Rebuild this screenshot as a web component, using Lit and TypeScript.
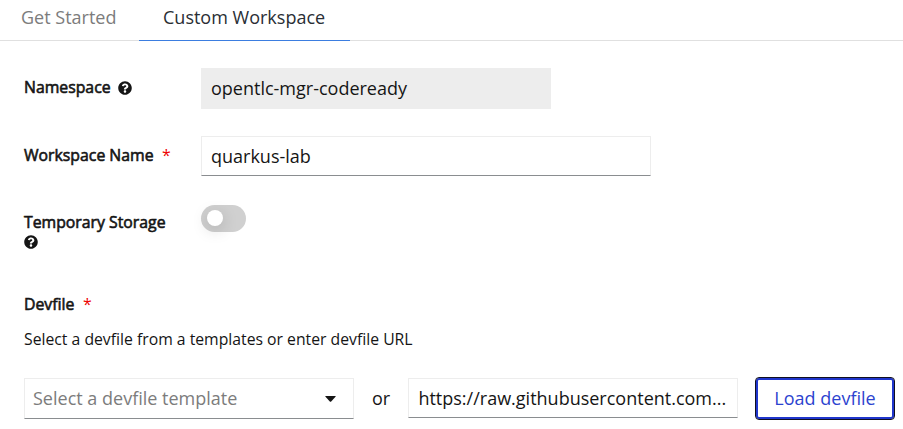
import { LitElement, html, css } from "lit";
import { customElement } from "lit/decorators.js";

const help = html`<svg class="help" viewBox="0 0 512 512" aria-label="Help">
  <path fill="currentColor" d="M504 256c0 136.997-111.043 248-248 248S8 392.997 8 256C8 119.083 119.043 8 256 8s248 111.083 248 248zM262.655 90c-54.497 0-89.255 22.957-116.549 63.758-3.536 5.286-2.353 12.415 2.715 16.258l34.699 26.31c5.205 3.947 12.621 3.008 16.665-2.122 17.864-22.658 30.113-35.797 57.303-35.797 20.429 0 45.698 13.148 45.698 32.958 0 14.976-12.363 22.667-32.534 33.976C247.128 238.528 216 254.941 216 296v4c0 6.627 5.373 12 12 12h56c6.627 0 12-5.373 12-12v-1.333c0-28.462 83.186-29.647 83.186-106.667 0-58.002-60.165-102-116.531-102zM256 338c-25.365 0-46 20.635-46 46 0 25.364 20.635 46 46 46s46-20.636 46-46c0-25.365-20.635-46-46-46z"/>
</svg>`;

@customElement("app-root")
export class AppRoot extends LitElement {
  static styles = css`
    :host { display: block; height: 429px; overflow: hidden; background: #fff; color: #151515; font-family: "Open Sans", "Noto Sans", sans-serif; font-size: 18px; line-height: 24px; }
    * { box-sizing: border-box; }
    .tabs { display: flex; height: 41px; border-bottom: 1px solid #e0e0e0; }
    .tab { height: 41px; padding-top: 5px; color: #7c7c7c; white-space: nowrap; }
    .first { width: 139px; padding-left: 21px; }
    .active { width: 211px; padding-left: 24px; color: #292e34; border-bottom: 1px solid #3b7de0; }
    .form { padding: 27px 0 0 24px; }
    .row { display: flex; align-items: flex-start; }
    .label { width: 177px; font-size: 15.8px; line-height: 20px; -webkit-text-stroke: 0.6px #151515; white-space: nowrap; }
    .help { display: block; width: 14px; height: 14px; overflow: visible; }
    .inline { display: inline-block; vertical-align: -1.5px; margin-left: 3.4px; }
    .below { display: block; }
    .req { color: #e00; margin-left: 4.4px; -webkit-text-stroke: 0; }
    .field { height: 40px; border: 1px solid #ededed; border-bottom-color: #8a8d90; padding: 7px 9px; white-space: nowrap; overflow: hidden; text-overflow: ellipsis; }
    .disabled { width: 350px; height: 41px; padding: 8px 10px; border: 0; background: #ededed; }
    .name { width: 450px; }
    .ns { height: 68px; }
    .ns .label { padding-top: 9px; }
    .ws { height: 69px; }
    .ws .label { padding-top: 9px; }
    .ts { height: 89px; }
    .ts .label { padding-top: 7px; }
    .below { margin-top: 3px; }
    .switch { width: 45px; height: 27px; border-radius: 14px; background: #d0d0d0; padding: 5px 5.5px; }
    .knob { width: 16px; height: 16px; border-radius: 50%; background: #fff; box-shadow: 0 4px 16px rgba(3, 3, 3, .18); }
    .hint { font-size: 15.76px; line-height: 24px; margin-top: 13px; }
    .load { display: flex; margin-top: 27px; }
    .select { display: flex; justify-content: space-between; width: 330px; height: 41px; padding: 7px 17px 7px 8px; color: #7c7c7c; }
    .arrow { width: 11px; height: 6px; margin-top: 10px; fill: #151515; }
    .or { width: 54px; text-align: center; padding-top: 8px; }
    .url { width: 330px; padding-left: 9.4px; padding-right: 8px; }
    .btn { width: 140px; height: 43px; margin: -1px 0 0 17px; border: 1px solid #101020; border-radius: 4px; box-shadow: inset 0 0 0 2px #2036cc; color: #2c43cf; text-align: center; line-height: 41px; }
  `;

  render() {
    return html`
      <div class="tabs"><div class="tab first">Get Started</div><div class="tab active">Custom Workspace</div></div>
      <div class="form">
        <div class="row ns"><div class="label">Namespace <span class="inline">${help}</span></div><div class="field disabled">opentlc-mgr-codeready</div></div>
        <div class="row ws"><div class="label">Workspace Name <span class="req">*</span></div><div class="field name">quarkus-lab</div></div>
        <div class="row ts"><div class="label">Temporary Storage<span class="below">${help}</span></div><div class="switch"><div class="knob"></div></div></div>
        <div class="label">Devfile <span class="req">*</span></div>
        <div class="hint">Select a devfile from a templates or enter devfile URL</div>
        <div class="load">
          <div class="field select"><span>Select a devfile template</span><svg class="arrow" viewBox="0 0 11 6"><path d="M.7 0h9.6q.8 0 .2.8L6.2 5.5q-.7.7-1.4 0L.5.8Q-.1 0 .7 0z"/></svg></div>
          <div class="or">or</div>
          <div class="field url">https://raw.githubusercontent.com...</div>
          <div class="btn">Load devfile</div>
        </div>
      </div>`;
  }
}
